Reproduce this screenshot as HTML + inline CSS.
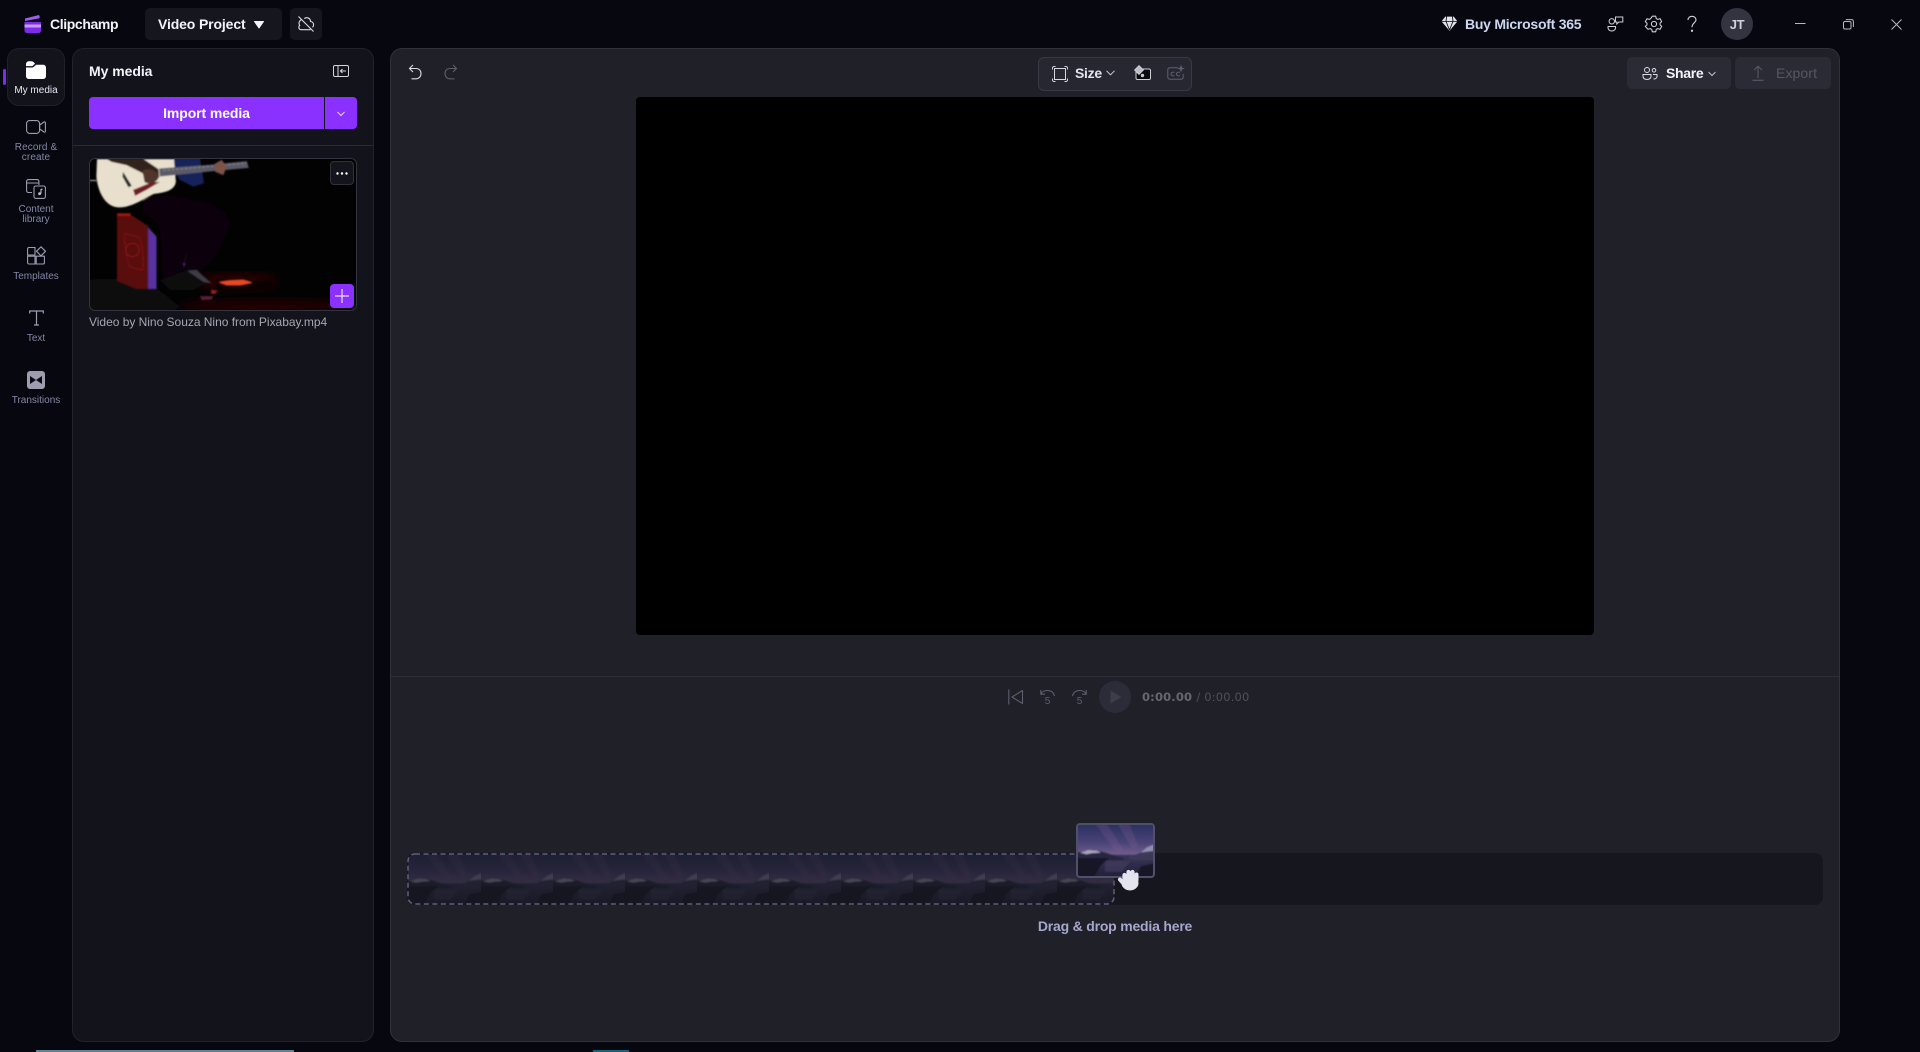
<!DOCTYPE html>
<html><head><meta charset="utf-8"><title>Clipchamp</title>
<style>
*{box-sizing:border-box;margin:0;padding:0}
html,body{width:1920px;height:1052px;overflow:hidden;background:#07070f;font-family:"Liberation Sans",sans-serif;color:#fff}
.a{position:absolute}
svg{position:absolute;overflow:visible;fill:none}
.t{position:absolute;white-space:nowrap;line-height:1}
.nav{position:absolute;left:0;width:72px;text-align:center;font-size:10px;line-height:10px;color:#8488a6}
</style></head><body>
<svg width="0" height="0" style="position:absolute">
<defs>
<linearGradient id="sky" x1="0" y1="0" x2="0" y2="1"><stop offset="0" stop-color="#2c3060"/><stop offset=".35" stop-color="#4a4478"/><stop offset=".6" stop-color="#76608f"/></linearGradient>
<linearGradient id="lake" x1="0" y1="0" x2="0" y2="1"><stop offset="0" stop-color="#39355a"/><stop offset="1" stop-color="#1b192e"/></linearGradient>
<filter id="soft" x="-10%" y="-10%" width="120%" height="120%"><feGaussianBlur stdDeviation=".7"/></filter>
<symbol id="scene" viewBox="0 0 72 48" preserveAspectRatio="none">
<rect width="72" height="48" fill="url(#sky)"/>
<g filter="url(#soft)">
<path d="M14 -4L36 24L44 24L26 -4ZM36 -4L52 22L58 20L48 -4Z" fill="#8a5f94" opacity=".24"/>
<rect x="-6" y="28" width="84" height="26" fill="url(#lake)"/>
<path d="M-6 27L8 24L16 23L26 26L36 29L44 31V33H-6Z" fill="#26263f"/>
<path d="M2 26L10 23.500L18 24L22 26L14 26.500L8 27.500Z" fill="#a8a4c0"/>
<path d="M48 30L58 27L65 22L78 15V33H52Z" fill="#3a3858"/>
<path d="M60 26L66 21L78 16V24L66 25Z" fill="#938eb0"/>
<path d="M-6 31H30L22 38L12 54H-6Z" fill="#141327"/>
<path d="M54 54L60 39L78 35V54Z" fill="#131226"/>
<path d="M26 34H50L42 44H26Z" fill="#4e4868" opacity=".45"/>
</g>
</symbol>
</defs>
</svg>

<!-- Top bar -->
<svg style="left:23px;top:14px" width="20" height="20" viewBox="0 0 20 20">
<path d="M2 4.500L15 1.200c1-.2 1.600.3 1.600 1.200v1.800L2 7z" fill="#a35cf0"/>
<path d="M1.500 8h16.500v8.500c0 1.500-1 2.500-2.500 2.500H4c-1.500 0-2.500-1-2.500-2.500z" fill="#7c2be8"/>
<path d="M1.500 10.500H18V13.500H1.500z" fill="#c79cf7"/>
</svg>
<div class="t" style="left:50px;top:17px;font-size:14px;font-weight:700;letter-spacing:-.38px;color:#f3f3f8">Clipchamp</div>
<div class="a" style="left:145px;top:8px;width:137px;height:32px;background:#16171e;border-radius:5px"></div>
<div class="t" style="left:158px;top:17px;font-size:14px;font-weight:700;letter-spacing:-.13px;color:#f3f3f8">Video Project</div>
<svg style="left:253px;top:20px" width="12" height="9" viewBox="0 0 12 9"><path d="M1.500 1.500H10.500L6 8z" fill="#f3f3f8" stroke="#f3f3f8" stroke-linejoin="round"/></svg>
<div class="a" style="left:290px;top:8px;width:32px;height:32px;background:#16171e;border-radius:5px"></div>
<svg style="left:297px;top:15px" width="18" height="18" viewBox="0 0 18 18" stroke="#dcdce6" stroke-width="1.100"><path d="M1.500 1.500L16.500 16.500M5 4.500C3.500 4.800 2 6.500 2 8.300c0 .8.300 1.500.7 2.100-1.300 1-1.300 4.100 1.500 4.300h9.300M7.300 3.600C8 3 8.800 2.700 9.600 2.700c2.300 0 3.800 1.500 4 3.800 1.800.2 3 1.700 3 3.300 0 1-.4 1.800-1.100 2.500"/></svg>

<svg style="left:1441px;top:15px" width="17" height="17" viewBox="0 0 16 16"><path d="M4 1.500H12L15.500 6L8 14.800L.5 6z" fill="#e3e3ee"/><path d="M.5 6H15.500M5.300 1.500L4.700 6L8 14M10.700 1.500L11.300 6L8 14" stroke="#07070f" stroke-width=".8"/></svg>
<div class="t" style="left:1465px;top:17px;font-size:14px;font-weight:700;letter-spacing:-.25px;color:#cdd8f0">Buy Microsoft 365</div>
<svg style="left:1607px;top:16px" width="17" height="16" viewBox="0 0 17 16" stroke="#d0d0dc" stroke-width="1"><circle cx="4.800" cy="5.300" r="2.700"/><path d="M1 10.500H8.500C9 13 7.500 15 4.800 15S.6 13 1 10.500ZM8.500 1H15.800V6H11.800L9.800 8V6H8.500Z"/></svg>
<svg style="left:1645px;top:15px" width="18" height="18" viewBox="0 0 18 18" stroke="#d0d0dc" stroke-width="1.050"><circle cx="9" cy="9" r="2.600"/><path d="M7.300 1.200h3.400l.5 2.300 1.500.9 2.300-.7 1.700 2.900-1.700 1.600v1.600l1.700 1.600-1.700 2.900-2.300-.7-1.500.9-.5 2.300H7.300l-.5-2.300-1.500-.9-2.300.7L.3 11.400 2 9.800V8.200L.3 6.600 2 3.700l2.300.7 1.500-.9z" stroke-linejoin="round"/></svg>
<svg style="left:1686px;top:15px" width="12" height="18" viewBox="0 0 12 18" stroke="#d0d0dc" stroke-width="1.100"><path d="M2 5C2 2.800 3.800 1.300 6 1.300S10 2.800 10 4.800C10 7.800 6 8 6 12.200"/><circle cx="6" cy="15.800" r=".6" fill="#d0d0dc"/></svg>
<div class="a" style="left:1721px;top:8px;width:32px;height:32px;border-radius:50%;background:#33343f"></div>
<div class="t" style="left:1721px;top:18px;width:32px;text-align:center;font-size:13px;color:#d0d1dc;font-weight:700;letter-spacing:-.3px">JT</div>
<svg style="left:1795px;top:18px" width="11" height="11" viewBox="0 0 11 11" stroke="#b8b8c2"><path d="M0 5.500H10.500"/></svg>
<svg style="left:1843px;top:19px" width="11" height="11" viewBox="0 0 11 11" stroke="#b8b8c2"><rect x=".5" y="2.500" width="7.500" height="7.500" rx="1.500"/><path d="M2.800 .6H8.500C9.600 .6 10.400 1.400 10.400 2.500V8"/></svg>
<svg style="left:1891px;top:19px" width="11" height="11" viewBox="0 0 11 11" stroke="#b8b8c2"><path d="M.5 .5L10.500 10.500M10.500 .5L.5 10.500"/></svg>

<!-- Side nav -->
<div class="a" style="left:7px;top:48px;width:58px;height:58px;border-radius:12px;background:#13141b;border:1px solid #1f2029"></div>
<div class="a" style="left:3px;top:69px;width:3px;height:16px;border-radius:2px;background:#7c2cf0"></div>
<svg style="left:26px;top:61px" width="20" height="18" viewBox="0 0 20 18"><path d="M0 3.500C0 1.500 1.300 .3 3 .3H5.500C7 .3 8 1.500 9 2.800L6.300 5.100H0ZM0 6.500H6.800L10.200 3.700H17C18.800 3.700 20 4.900 20 6.500V15C20 16.800 18.800 18 17 18H3C1.200 18 0 16.800 0 15Z" fill="#fff"/></svg>
<div class="nav" style="top:86px;color:#e6e8f6">My media</div>

<svg style="left:26px;top:120px" width="20" height="14" viewBox="0 0 20 14" stroke="#9d9db0" stroke-width="1.100"><rect x=".6" y=".6" width="13" height="12.800" rx="3"/><path d="M13.600 5L18 2C18.800 1.600 19.400 2 19.400 2.800V11.200C19.400 12 18.800 12.400 18 12L13.600 9Z"/></svg>
<div class="nav" style="top:143px;letter-spacing:.1px">Record &amp;<br>create</div>

<svg style="left:26px;top:179px" width="20" height="20" viewBox="0 0 20 20" stroke="#9d9db0" stroke-width="1.100"><path d="M6 13.500H2.500C1.400 13.500.6 12.700.6 11.600V2.500C.6 1.400 1.400.6 2.500.6H11C12.100.6 12.900 1.400 12.900 2.500V6M.6 4H12.900"/><rect x="8" y="7" width="11.400" height="12.400" rx="1.800"/><path d="M15 10V14.500M15 10L16.500 10.500" stroke="#c0c0cc"/><circle cx="13.600" cy="14.700" r="1.400" fill="#c0c0cc" stroke="none"/></svg>
<div class="nav" style="top:205px">Content<br>library</div>

<svg style="left:27px;top:246px" width="19" height="19" viewBox="0 0 19 19" stroke="#9d9db0" stroke-width="1.100"><path d="M2 1.500H8V9H.6V3C.6 2.200 1.200 1.500 2 1.500ZM.6 10.200H8V18H2C1.200 18 .6 17.400.6 16.600ZM9.200 10.200H17.400V16.600C17.400 17.400 16.800 18 16 18H9.200Z"/><path d="M14 .8L18.500 5.300L14 9.800L9.500 5.300Z" stroke-linejoin="round"/></svg>
<div class="nav" style="top:272px">Templates</div>

<svg style="left:29px;top:310px" width="15" height="16" viewBox="0 0 15 16" stroke="#9d9db0" stroke-width="1.200"><path d="M.7 3.500V1H14.300V3.500M7.500 1V15M5 15H10"/></svg>
<div class="nav" style="top:334px">Text</div>

<svg style="left:27px;top:371px" width="18" height="18" viewBox="0 0 18 18"><rect width="18" height="18" rx="3" fill="#9d9db0"/><path d="M3 5L9 9L3 13ZM15 5L9 9L15 13Z" fill="#0a0a12"/></svg>
<div class="nav" style="top:396px">Transitions</div>

<!-- Left panel -->
<div class="a" style="left:72px;top:48px;width:302px;height:994px;background:#13141b;border:1px solid #21222b;border-radius:12px"></div>
<div class="t" style="left:89px;top:64px;font-size:14px;font-weight:700;letter-spacing:-.05px;color:#f3f3f8">My media</div>
<svg style="left:333px;top:65px" width="16" height="12" viewBox="0 0 16 12" stroke="#d4d4de" stroke-width="1"><rect x=".5" y=".5" width="15" height="11" rx="1.500"/><path d="M5 .5V11.500"/><path d="M13 6H7.500M9.500 4L7.500 6L9.500 8" stroke-width="1.100"/></svg>
<div class="a" style="left:89px;top:97px;width:268px;height:32px;background:#8a31ff;border-radius:4px"></div>
<div class="a" style="left:324px;top:97px;width:1px;height:32px;background:#15161d"></div>
<div class="t" style="left:89px;top:106px;width:235px;text-align:center;font-size:14px;font-weight:700;letter-spacing:-.1px;color:#fff">Import media</div>
<svg style="left:337px;top:111px" width="8" height="6" viewBox="0 0 8 6" stroke="#e6d6ff"><path d="M.5 1L4 4.500L7.500 1"/></svg>
<div class="a" style="left:73px;top:145px;width:300px;height:1px;background:#2a2b34"></div>

<div class="a" style="left:89px;top:158px;width:268px;height:153px;border-radius:6px;overflow:hidden;background:#040304"></div>
<svg style="left:89px;top:158px" width="268" height="153" viewBox="28 25 802 457">
<defs><filter id="b1"><feGaussianBlur stdDeviation="2"/></filter><filter id="b2"><feGaussianBlur stdDeviation="14"/></filter>
<clipPath id="cc"><rect x="30" y="27" width="798" height="453" rx="14"/></clipPath></defs>
<g clip-path="url(#cc)">
<rect x="28" y="25" width="802" height="457" fill="#030203"/>
<ellipse cx="560" cy="470" rx="260" ry="24" fill="#220404" filter="url(#b2)"/>
<ellipse cx="470" cy="395" rx="120" ry="26" fill="#2a0604" filter="url(#b2)"/>
<g filter="url(#b1)">
<path d="M30 390C90 380 170 390 232 415L300 470L280 482H30Z" fill="#100e10"/>
<path d="M112 192H150L205 228V416H170L112 392Z" fill="#5a090b"/>
<path d="M135 250L178 262C190 290 192 340 188 360L150 350C138 320 135 290 135 250Z" fill="none" stroke="#7a1416" stroke-width="3"/>
<circle cx="158" cy="300" r="20" fill="none" stroke="#7a1416" stroke-width="4"/>
<rect x="112" y="190" width="40" height="8" fill="#a01410"/>
<path d="M205 232L230 260V416H205Z" fill="#5a32a0"/>
<path d="M330 230L360 250V340L310 360V300Z" fill="#241008"/>
<path d="M328 254C344 262 348 300 332 332" fill="none" stroke="#bdb2d0" stroke-width="5"/>
<path d="M312 345L332 335" stroke="#6a33a0" stroke-width="8"/>
<path d="M280 25H360L372 100L340 110L300 90L282 60Z" fill="#16235a"/>
<path d="M52 28H282L288 95C285 122 255 128 222 132C190 148 150 176 112 172C78 168 55 130 50 80Z" fill="#e8e0cc"/>
<path d="M80 27H190L236 58L238 82L205 100L188 70L140 46L95 36Z" fill="#33211e"/>
<path d="M188 62C208 52 236 62 236 84C228 102 204 104 194 96Z" fill="#4f352c"/>
<path d="M160 120L214 98L240 96L200 120L166 138Z" fill="#6f1a26"/>
<path d="M130 66L156 108L146 112L128 80Z" fill="#24242c"/>
<path d="M238 56L400 44L500 34L506 54L400 64L240 80Z" fill="#5a5a68"/>
<path d="M250 62L500 40" stroke="#8a8a94" stroke-width="3" stroke-dasharray="8 5"/>
<path d="M404 42L425 30L440 50L430 76L406 66Z" fill="#7d5346"/>
<path d="M190 150C240 132 300 132 340 155C350 200 340 260 320 310L300 380L250 395C245 320 250 250 230 215L190 190Z" fill="#08060a"/>
<path d="M330 150C400 150 450 190 450 220C430 290 400 340 350 370L310 360C330 280 340 210 330 150Z" fill="#070508"/>
<path d="M240 390L320 360L390 395L340 420H270Z" fill="#090709"/>
<path d="M322 362L350 360L395 400L370 395Z" fill="#3c3c44"/>
<path d="M410 390H590L580 415L520 425H410Z" fill="#0e0505"/>
<path d="M416 396L450 390L490 388L517 398L480 405H440Z" fill="#e84a20"/>
<path d="M360 438H400L395 448L365 450Z" fill="#5c1c38"/>
<path d="M395 418L412 422L405 432L392 430Z" fill="#8f2412"/>
<path d="M30 92H50" stroke="#c8b8b0" stroke-width="3"/>
</g>
</g>
</svg>
<div class="a" style="left:89px;top:158px;width:268px;height:153px;border-radius:6px;border:1px solid #33343f"></div>
<div class="a" style="left:330px;top:161px;width:24px;height:24px;background:#14151c;border:1px solid #30313b;border-radius:4px"></div>
<svg style="left:336px;top:172px" width="12" height="3" viewBox="0 0 12 3"><circle cx="1.500" cy="1.500" r="1.200" fill="#fff"/><circle cx="6" cy="1.500" r="1.200" fill="#fff"/><circle cx="10.500" cy="1.500" r="1.200" fill="#fff"/></svg>
<div class="a" style="left:330px;top:284px;width:24px;height:24px;background:#8a31ff;border-radius:4px"></div>
<svg style="left:335px;top:289px" width="14" height="14" viewBox="0 0 14 14" stroke="#ebe0ff" stroke-width="1.200"><path d="M7 0V14M0 7H14"/></svg>
<div class="t" style="left:89px;top:316px;font-size:12px;letter-spacing:-.02px;color:#a5a6b2">Video by Nino Souza Nino from Pixabay.mp4</div>

<!-- Editor panel -->
<div class="a" style="left:390px;top:48px;width:1450px;height:994px;background:#1f2028;border:1px solid #30313b;border-radius:12px"></div>
<svg style="left:408px;top:64px" width="14" height="16" viewBox="0 0 14 16" stroke="#dadae2" stroke-width="1.100"><path d="M5 1L1.500 4.500L5 8M1.500 4.500H8C11 4.500 13 6.500 13 9.500S11 14.800 8 14.800H3.500"/></svg>
<svg style="left:444px;top:64px" width="14" height="16" viewBox="0 0 14 16" stroke="#5c5d68" stroke-width="1.100"><path d="M9 1L12.500 4.500L9 8M12.500 4.500H6C3 4.500 1 6.500 1 9.500S3 14.800 6 14.800H10.500"/></svg>

<div class="a" style="left:1038px;top:57px;width:154px;height:34px;background:#262731;border:1px solid #383945;border-radius:6px"></div>
<svg style="left:1052px;top:66px" width="16" height="16" viewBox="0 0 16 16" stroke="#d6d6e0" stroke-width="1"><rect x="2.500" y="2.500" width="11" height="11"/><path d="M.5 3.500V2C.5 1.200 1.200.5 2 .5H3.500M12.500 .5H14C14.800 .5 15.500 1.200 15.500 2V3.500M15.500 12.500V14C15.500 14.800 14.800 15.500 14 15.500H12.500M3.500 15.500H2C1.200 15.500 .5 14.800 .5 14V12.500"/></svg>
<div class="t" style="left:1075px;top:66px;font-size:14px;font-weight:700;letter-spacing:-.3px;color:#e4e4ec">Size</div>
<svg style="left:1106px;top:70px" width="9" height="6" viewBox="0 0 9 6" stroke="#cfcfd8"><path d="M.5 .8L4.500 4.800L8.500 .8"/></svg>
<svg style="left:1133px;top:64px" width="18" height="16" viewBox="0 0 18 16"><rect x="3" y="5" width="14.500" height="10.500" rx="1.500" fill="#0a0a0e" stroke="#d0d0da"/><path d="M6 1.500L10.500 6L6 10.500L1.500 6Z" fill="#bdbdc8" stroke="#e0e0e8" stroke-width=".7"/><circle cx="9.500" cy="11.500" r="1.700" fill="#c8c8d2"/></svg>
<svg style="left:1167px;top:64px" width="18" height="16" viewBox="0 0 18 16" stroke="#5f606c" stroke-width="1"><path d="M11 3.800H3C1.700 3.800 .8 4.700 .8 6V13C.8 14.300 1.700 15.200 3 15.200H14C15.300 15.200 16.200 14.300 16.200 13V10"/><path d="M7.500 8.500C6 7.600 4 8.500 4 10S6 12.400 7.500 11.500M13 8.500C11.500 7.600 9.500 8.500 9.500 10S11.500 12.400 13 11.500"/><path d="M14 .5L15 3.500L17.800 4.500L15 5.500L14 8.500L13 5.500L10.200 4.500L13 3.500Z" fill="#5f606c" stroke="none"/></svg>

<div class="a" style="left:1627px;top:57px;width:104px;height:32px;background:#2a2b35;border-radius:5px"></div>
<svg style="left:1642px;top:67px" width="16" height="13" viewBox="0 0 16 13" stroke="#dcdce4" stroke-width="1"><circle cx="5" cy="3" r="2.500"/><circle cx="12" cy="3.300" r="1.800"/><path d="M1 7.500H9V9.500C9 11 7.500 12.500 5 12.500S1 11 1 9.500ZM11 7.500H15V9.500C15 11 13.500 12 11.500 12"/></svg>
<div class="t" style="left:1666px;top:66px;font-size:14px;font-weight:700;letter-spacing:-.3px;color:#f3f3f8">Share</div>
<svg style="left:1708px;top:71px" width="8" height="6" viewBox="0 0 8 6" stroke="#c0c0cc"><path d="M.5 1L4 4.500L7.500 1"/></svg>
<div class="a" style="left:1735px;top:57px;width:96px;height:32px;background:#2a2b35;border-radius:5px"></div>
<svg style="left:1752px;top:65px" width="12" height="16" viewBox="0 0 12 16" stroke="#575864" stroke-width="1.100"><path d="M6 13V1.500M2 5L6 1.200L10 5M.5 15.300H11.500"/></svg>
<div class="t" style="left:1776px;top:66px;font-size:14px;letter-spacing:.1px;color:#565762">Export</div>

<div class="a" style="left:636px;top:97px;width:958px;height:538px;background:#000;border-radius:4px"></div>
<div class="a" style="left:391px;top:676px;width:1448px;height:1px;background:#2c2d37"></div>

<!-- Player controls -->
<svg style="left:1008px;top:689px" width="15" height="16" viewBox="0 0 15 16" stroke="#5d5e6e" stroke-width="1.100"><path d="M.8 .5V15.500M14.500 1.500V14.500L4 8Z" stroke-linejoin="round"/></svg>
<svg style="left:1040px;top:689px" width="15" height="9" viewBox="0 0 15 9" stroke="#5d5e6e" stroke-width="1.100"><path d="M14.500 7C13.500 3 10.500 1.500 7.500 1.500S2 2.500 1 5M.8 1V5.200H5"/></svg>
<div class="t" style="left:1040px;top:697px;width:15px;text-align:center;font-size:10px;color:#5d5e6e">5</div>
<svg style="left:1072px;top:689px" width="15" height="9" viewBox="0 0 15 9" stroke="#5d5e6e" stroke-width="1.100"><path d="M.5 7C1.500 3 4.500 1.500 7.500 1.500S13 2.500 14 5M14.200 1V5.200H10"/></svg>
<div class="t" style="left:1072px;top:697px;width:15px;text-align:center;font-size:10px;color:#5d5e6e">5</div>
<div class="a" style="left:1099px;top:681px;width:32px;height:32px;border-radius:50%;background:#2b2c37"></div>
<svg style="left:1110px;top:690px" width="12" height="14" viewBox="0 0 12 14"><path d="M.5 .5L11.500 7L.5 13.500Z" fill="#3c3d4a"/></svg>
<div class="t" style="left:1142px;top:692px;font-family:'DejaVu Sans',sans-serif;font-size:11.500px;font-weight:700;letter-spacing:.17px;color:#666771">0:00.00 <span style="font-weight:400;color:#4f505b">/ 0:00.00</span></div>

<!-- Timeline -->
<div class="a" style="left:407px;top:853px;width:1416px;height:52px;background:#16171e;border-radius:8px"></div>
<div class="a" style="left:408px;top:854px;width:706px;height:50px;border-radius:8px;overflow:hidden;opacity:.33">
<svg style="left:0;top:0" width="706" height="50">
<use href="#scene" x="0" width="73" height="50"/><use href="#scene" x="73" width="72" height="50"/><use href="#scene" x="145" width="72" height="50"/><use href="#scene" x="217" width="72" height="50"/><use href="#scene" x="289" width="72" height="50"/><use href="#scene" x="361" width="72" height="50"/><use href="#scene" x="433" width="72" height="50"/><use href="#scene" x="505" width="72" height="50"/><use href="#scene" x="577" width="72" height="50"/><use href="#scene" x="649" width="72" height="50"/>
</svg>
</div>
<svg style="left:407px;top:853px" width="708" height="52"><rect x="1" y="1" width="706" height="50" rx="7" stroke="#5f5e7c" stroke-width="1.500" stroke-dasharray="5 3.500" fill="none"/></svg>
<div class="a" style="left:1076px;top:823px;width:79px;height:55px;border:2px solid #50506a;border-radius:4px;overflow:hidden;background:#2a2a50">
<svg style="left:0;top:0" width="75" height="51"><use href="#scene" width="75" height="51"/></svg>
</div>
<svg style="left:1117px;top:866px" width="26" height="26" viewBox="0 0 26 26">
<g stroke="#e4e4ee" stroke-linecap="round" fill="none">
<path d="M7.500 9V14" stroke-width="4.200"/><path d="M11.500 6V13" stroke-width="4.200"/><path d="M15.500 6V13" stroke-width="4.200"/><path d="M19.500 8.500V14" stroke-width="4"/>
<path d="M3 13.500L7 18" stroke-width="4"/>
</g>
<ellipse cx="13" cy="17" rx="8.500" ry="7.500" fill="#e4e4ee"/>
</svg>
<div class="t" style="left:1015px;top:919px;width:200px;text-align:center;font-size:14px;font-weight:700;letter-spacing:-.2px;color:#a4a8cc">Drag &amp; drop media here</div>

<!-- Bottom taskbar slivers -->
<div class="a" style="left:36px;top:1050px;width:258px;height:2px;background:#5d8494"></div>
<div class="a" style="left:593px;top:1050px;width:36px;height:2px;background:#1c6078"></div>
</body></html>
